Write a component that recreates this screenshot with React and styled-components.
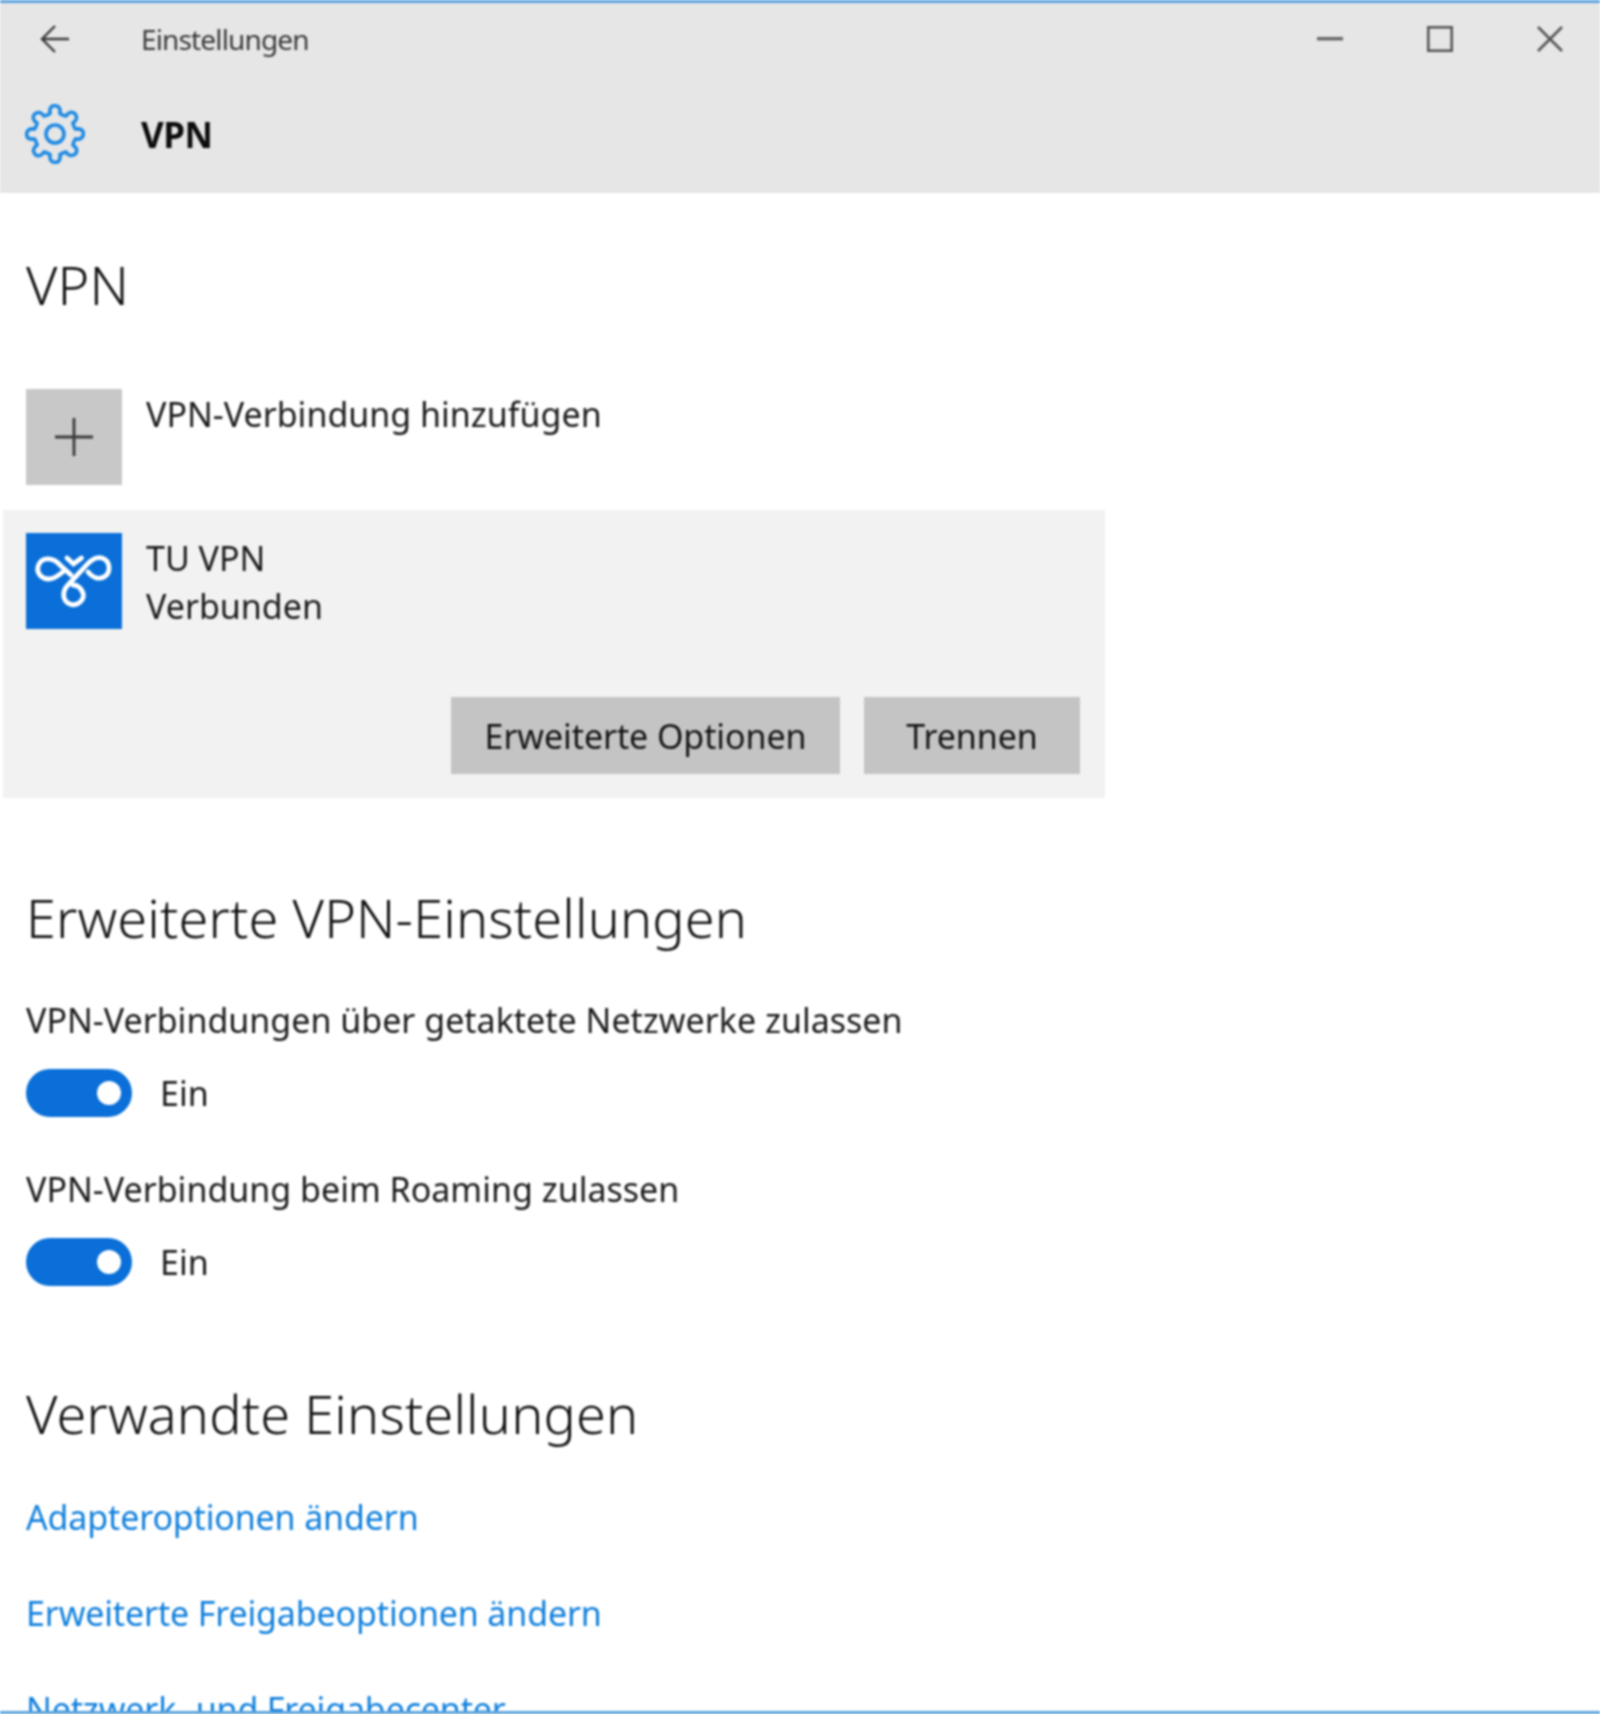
import styled, { createGlobalStyle } from "styled-components";

const GlobalStyle = createGlobalStyle`
  html, body {
    margin: 0;
    padding: 0;
    background: #fff;
  }
`;

const Window = styled.div`
  box-sizing: border-box;
  width: 1600px;
  height: 1714px;
  overflow: hidden;
  border-top: 3px solid #5aa3de;
  border-bottom: 3px solid #5aa3de;
  font-family: "Noto Sans", "Open Sans", sans-serif;
  color: #1f1f1f;
  filter: blur(0.8px);
`;

const Header = styled.header`
  height: 190px;
  background: #e6e6e6;
`;

const TitleBar = styled.div`
  display: flex;
  align-items: center;
  gap: 10px;
  height: 71px;
  margin-bottom: 4px;
`;

const BackButton = styled.div`
  display: flex;
  justify-content: center;
  width: 110px;
  margin-right: -10px;
`;

const AppTitle = styled.div`
  flex: 1;
  margin-left: 31px;
  font-size: 28px;
  letter-spacing: -0.85px;
  color: #3a3a3a;
`;

const WindowButton = styled.div`
  display: flex;
  align-items: center;
  justify-content: center;
  width: 100px;
`;

const PageBar = styled.div`
  display: flex;
  align-items: center;
  height: 112px;
`;

const GearSlot = styled.div`
  display: flex;
  justify-content: center;
  width: 110px;
`;

const PageTitle = styled.div`
  margin-left: 31px;
  font-size: 35px;
  font-weight: 700;
  letter-spacing: -0.5px;
  color: #0c0c0c;
`;

const Section = styled.section`
  padding: 0 26px;
  margin-top: ${(p) => p.$top || 0}px;
`;

const Heading = styled.h2`
  margin: 0;
  font-size: 54px;
  font-weight: 300;
  line-height: 60px;
  letter-spacing: 0.15px;
  color: #111;
`;

const Row = styled.div`
  display: flex;
  gap: 24px;
  margin-top: ${(p) => p.$top || 0}px;
`;

const Tile = styled.div`
  display: flex;
  align-items: center;
  justify-content: center;
  width: 96px;
  height: 96px;
  background: ${(p) => p.$bg};
`;

const BodyText = styled.div`
  font-size: 34px;
  line-height: 48px;
  color: #1a1a1a;
`;

const TileText = styled(BodyText)`
  margin-top: 1px;
  height: 95px;
`;

const Card = styled.div`
  width: 1102px;
  margin: 25px 0 0 3px;
  padding: 23px 25px 24px 23px;
  box-sizing: border-box;
  background: #f2f2f2;
`;

const CardActions = styled.div`
  display: flex;
  justify-content: flex-end;
  gap: 24px;
  margin-top: 68px;
`;

const ActionButton = styled.div`
  display: flex;
  align-items: center;
  justify-content: center;
  width: ${(p) => p.$width}px;
  height: 77px;
  background: #c4c4c4;
  font-size: 34px;
  letter-spacing: -0.1px;
  color: #141414;
`;

const ToggleRow = styled.div`
  display: flex;
  align-items: center;
  gap: 28px;
  margin-top: 25px;
`;

const Toggle = styled.div`
  display: flex;
  align-items: center;
  justify-content: flex-end;
  box-sizing: border-box;
  width: 106px;
  height: 48px;
  padding-right: 11px;
  border-radius: 24px;
  background: #0a6fd8;

  &::after {
    content: "";
    width: 24px;
    height: 24px;
    border-radius: 50%;
    background: #fff;
  }
`;

const SettingLabel = styled(BodyText)`
  margin-top: ${(p) => p.$top}px;
`;

const LinkList = styled.div`
  display: flex;
  flex-direction: column;
  gap: 48px;
  margin-top: 50px;
`;

const SettingLink = styled.a`
  font-size: 34px;
  line-height: 48px;
  letter-spacing: -0.15px;
  color: #0f7fdc;
`;

function gearPath(cx, cy, outer, inner, teeth) {
  const pts = [];
  const step = (Math.PI * 2) / teeth;
  for (let i = 0; i < teeth; i++) {
    const a = i * step - Math.PI / 2;
    const at = (r, o) => `${(cx + r * Math.cos(a + o)).toFixed(2)} ${(cy + r * Math.sin(a + o)).toFixed(2)}`;
    pts.push(
      `${i === 0 ? "M" : "L"} ${at(inner, -step * 0.3)}`,
      `Q ${at(outer, -step * 0.28)} ${at(outer, -step * 0.02)}`,
      `Q ${at(outer, step * 0.28)} ${at(inner, step * 0.3)}`,
      `Q ${at(inner * 0.96, step * 0.5)} ${at(inner, step * 0.7)}`
    );
  }
  return pts.join(" ") + " Z";
}

function GearIcon() {
  return (
    <svg width="60" height="60" viewBox="0 0 60 60" fill="none" stroke="#1f8ae3" strokeWidth="3.6">
      <path d={gearPath(30, 30, 28.5, 21, 8)} strokeLinejoin="round" />
      <circle cx="30" cy="30" r="9" />
    </svg>
  );
}

function ArrowIcon() {
  return (
    <svg width="30" height="30" viewBox="0 0 30 30" fill="none" stroke="#3a3a3a" strokeWidth="2.4">
      <path d="M29 15H3M15 2L2 15l13 13" />
    </svg>
  );
}

function MinimizeIcon() {
  return (
    <svg width="26" height="6" viewBox="0 0 26 6">
      <rect y="1" width="26" height="3.4" fill="#666" />
    </svg>
  );
}

function MaximizeIcon() {
  return (
    <svg width="26" height="26" viewBox="0 0 26 26" fill="none" stroke="#555" strokeWidth="2.6">
      <rect x="1.3" y="1.3" width="23.4" height="23.4" />
    </svg>
  );
}

function CloseIcon() {
  return (
    <svg width="28" height="28" viewBox="0 0 28 28" fill="none" stroke="#555" strokeWidth="2.6">
      <path d="M2 2l24 24M26 2L2 26" />
    </svg>
  );
}

function PlusIcon() {
  return (
    <svg width="40" height="40" viewBox="0 0 40 40" fill="none" stroke="#3a3a3a" strokeWidth="2.8">
      <path d="M1 20h38M20 1v38" />
    </svg>
  );
}

function VpnIcon() {
  return (
    <svg width="96" height="96" viewBox="0 0 96 96" fill="none" stroke="#fff" strokeWidth="4.8" strokeLinecap="round">
      <path d="M41 25l6.500 6 8-6" />
      <path d="M45 42L34 32C28 25 17 23 13 31 9 39 15 46 23 46 29 46 33 42 38 38" />
      <path d="M62 39C66 44 72 47 78 44 85 40 85 28 76 25 68 23 62 30 56 37L42 52C36 58 36 68 44 71 52 74 59 66 57 60 55 55 51 52 47 52" />
    </svg>
  );
}

function SettingToggle({ label, top }) {
  return (
    <>
      <SettingLabel $top={top}>{label}</SettingLabel>
      <ToggleRow>
        <Toggle />
        <BodyText>Ein</BodyText>
      </ToggleRow>
    </>
  );
}

export default function App() {
  return (
    <>
      <GlobalStyle />
      <Window>
        <Header>
          <TitleBar>
            <BackButton>
              <ArrowIcon />
            </BackButton>
            <AppTitle>Einstellungen</AppTitle>
            <WindowButton>
              <MinimizeIcon />
            </WindowButton>
            <WindowButton>
              <MaximizeIcon />
            </WindowButton>
            <WindowButton>
              <CloseIcon />
            </WindowButton>
          </TitleBar>
          <PageBar>
            <GearSlot>
              <GearIcon />
            </GearSlot>
            <PageTitle>VPN</PageTitle>
          </PageBar>
        </Header>

        <Section $top={61}>
          <Heading>VPN</Heading>
          <Row $top={75}>
            <Tile $bg="#c8c8c8">
              <PlusIcon />
            </Tile>
            <TileText>VPN-Verbindung hinzufügen</TileText>
          </Row>
        </Section>

        <Card>
          <Row>
            <Tile $bg="#0a6fd8">
              <VpnIcon />
            </Tile>
            <TileText>
              TU VPN
              <br />
              Verbunden
            </TileText>
          </Row>
          <CardActions>
            <ActionButton $width={389}>Erweiterte Optionen</ActionButton>
            <ActionButton $width={216}>Trennen</ActionButton>
          </CardActions>
        </Card>

        <Section $top={89}>
          <Heading>Erweiterte VPN-Einstellungen</Heading>
          <SettingToggle top={49} label="VPN-Verbindungen über getaktete Netzwerke zulassen" />
          <SettingToggle top={48} label="VPN-Verbindung beim Roaming zulassen" />
        </Section>

        <Section $top={97}>
          <Heading>Verwandte Einstellungen</Heading>
          <LinkList>
            <SettingLink>Adapteroptionen ändern</SettingLink>
            <SettingLink>Erweiterte Freigabeoptionen ändern</SettingLink>
            <SettingLink>Netzwerk- und Freigabecenter</SettingLink>
          </LinkList>
        </Section>
      </Window>
    </>
  );
}
